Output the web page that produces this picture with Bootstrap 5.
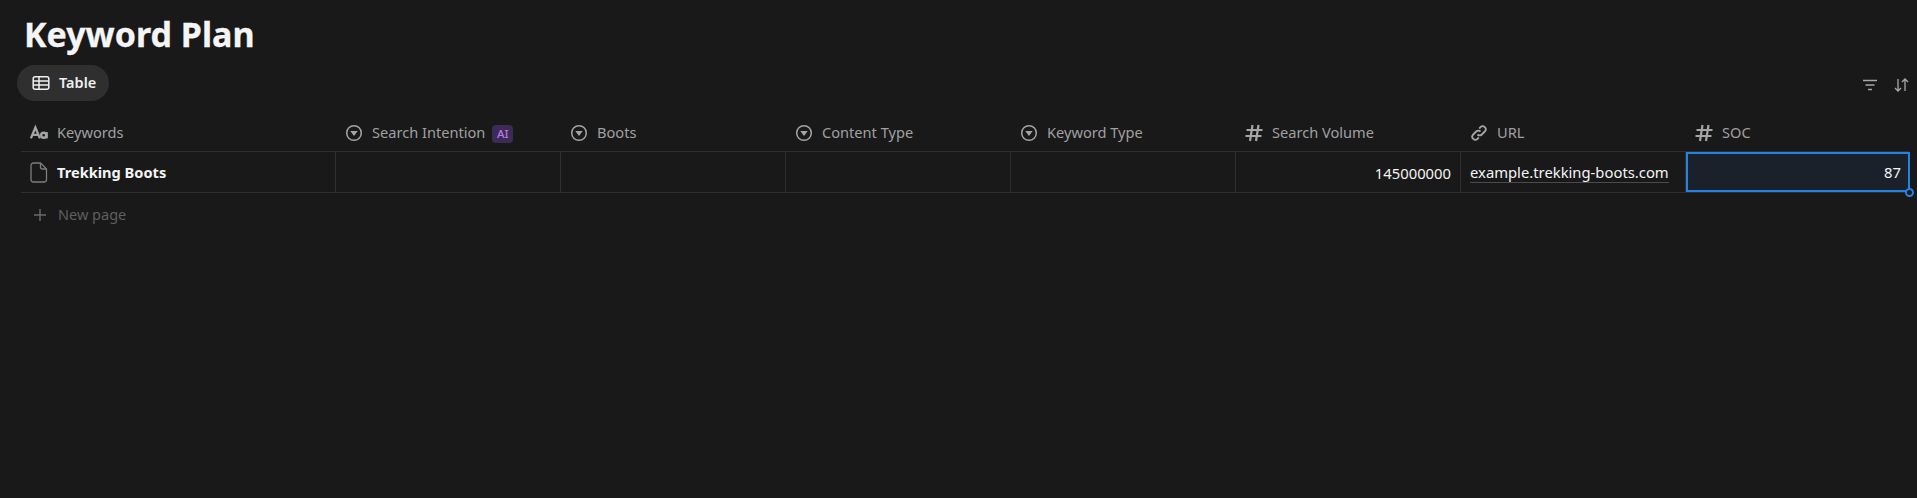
<!DOCTYPE html>
<html lang="en">
<head>
<meta charset="utf-8">
<title>Keyword Plan</title>
<link rel="stylesheet" href="https://cdn.jsdelivr.net/npm/bootstrap@5.3.0/dist/css/bootstrap.min.css">
<style>
html,body{height:100%;overflow:hidden}
body{background:#191919;color:#fff;font-family:"Noto Sans","Open Sans",sans-serif;font-size:15px}
.kp-page{padding:0 8px 0 17px;height:498px}
.kp-title{font-size:34px;font-weight:700;line-height:44px;margin:12px 0 9px 7px;color:#f5f5f5;font-family:"Noto Sans",sans-serif;-webkit-text-stroke:.3px #f5f5f5}
.kp-bar{height:36px;margin-bottom:14px}
.kp-pill{height:36px;width:92px;border-radius:18px;background:#2f2f2f;padding-left:15px;gap:9px;font-weight:600;font-size:14.5px;color:#f0f0f0}
.kp-tools{gap:16px;color:#9b9b9b;margin-top:3px}
.kp-table{margin-left:4px;width:1888px}
.kp-row{display:flex}
.kp-head{height:37px;border-bottom:1px solid #2f2f2f;color:#a0a0a0;font-size:14.6px}
.kp-body{height:41px;border-bottom:1px solid #2f2f2f}
.kp-cell{width:225px;flex:none;display:flex;align-items:center;padding:0 9px;gap:9px;white-space:nowrap}
.kp-first{width:315px}
.kp-body .kp-cell{border-right:1px solid #2f2f2f;font-size:14.8px;color:#f4f4f4;padding-top:2px}
.kp-body .kp-cell:last-child{border-right:0}
.kp-ico{flex:none;width:18px;height:18px;color:#a5a5a5}
.kp-doc{width:18px;height:21px;margin-top:-2px}
.kp-num{justify-content:flex-end}
.kp-name{font-weight:700;font-size:14.6px}
.kp-url{border-bottom:1px solid #4a4a4a;line-height:19px}
.kp-ai{background:#3c2b57;color:#b27ce8;font-size:11.5px;font-weight:500;border-radius:4px;width:21px;height:18px;display:flex;align-items:center;justify-content:center;margin-left:-2px;margin-top:2px}
.kp-body .kp-sel{position:relative;width:224px;background:#1a212a;box-shadow:inset 0 0 0 2px #2383e2;height:40px;padding:0 9px 0 0}
.kp-handle{position:absolute;right:-4px;bottom:-5px;width:9px;height:9px;border-radius:50%;border:2px solid #2383e2;background:#191919}
.kp-new{height:43px;padding-left:11px;gap:10px;color:#5f5f5f;font-size:14.5px}
</style>
</head>
<body>
<div class="kp-page">
  <h1 class="kp-title">Keyword Plan</h1>
  <div class="kp-bar d-flex justify-content-between align-items-center">
    <div class="kp-pill d-flex align-items-center">
      <svg width="18" height="18" viewBox="0 0 18 18" fill="none" stroke="#f0f0f0" stroke-width="1.500"><rect x="1.200" y="2.800" width="15.600" height="12.400" rx="2"/><path d="M1.200 7h15.600M1.200 11h15.600M7 3v12"/></svg>
      <span>Table</span>
    </div>
    <div class="kp-tools d-flex align-items-center">
      <svg width="16" height="12" viewBox="0 0 16 12" fill="none" stroke="#a8a8a8" stroke-width="1.500"><path d="M1 1.500h14M3.500 6h9M6 10.500h4"/></svg>
      <svg width="15" height="14" viewBox="0 0 15 14" fill="none" stroke="#a8a8a8" stroke-width="1.300"><path d="M4 1v12M1 10l3 3 3-3M11 13V1M8 4l3-3 3 3"/></svg>
    </div>
  </div>
  <div class="kp-table">
    <div class="kp-row kp-head">
      <div class="kp-cell kp-first"><svg class="kp-ico" viewBox="0 0 20 18" fill="none" stroke="#a5a5a5" stroke-width="2.600"><path d="M1 15L6 3l5 12M2.800 11h6.400"/><circle cx="15.200" cy="11.500" r="2.800"/><path d="M18.500 8v7"/></svg><span>Keywords</span></div>
      <div class="kp-cell"><svg class="kp-ico" viewBox="0 0 18 18"><circle cx="9" cy="9" r="7.300" fill="none" stroke="currentColor" stroke-width="1.500"/><path d="M5.300 7h7.400L9 12z" fill="currentColor"/></svg><span>Search Intention</span><span class="kp-ai">AI</span></div>
      <div class="kp-cell"><svg class="kp-ico" viewBox="0 0 18 18"><circle cx="9" cy="9" r="7.300" fill="none" stroke="currentColor" stroke-width="1.500"/><path d="M5.300 7h7.400L9 12z" fill="currentColor"/></svg><span>Boots</span></div>
      <div class="kp-cell"><svg class="kp-ico" viewBox="0 0 18 18"><circle cx="9" cy="9" r="7.300" fill="none" stroke="currentColor" stroke-width="1.500"/><path d="M5.300 7h7.400L9 12z" fill="currentColor"/></svg><span>Content Type</span></div>
      <div class="kp-cell"><svg class="kp-ico" viewBox="0 0 18 18"><circle cx="9" cy="9" r="7.300" fill="none" stroke="currentColor" stroke-width="1.500"/><path d="M5.300 7h7.400L9 12z" fill="currentColor"/></svg><span>Keyword Type</span></div>
      <div class="kp-cell"><svg class="kp-ico" viewBox="0 0 18 18" fill="none" stroke="currentColor" stroke-width="2.200"><path d="M7.500 1L5 17M13.500 1L11 17M1.500 6h16M.5 12h16"/></svg><span>Search Volume</span></div>
      <div class="kp-cell"><svg class="kp-ico" viewBox="0 0 18 18" fill="none" stroke="currentColor" stroke-width="1.800"><path d="M7.500 10.500a3 3 0 0 0 4.300 0l3-3a3 3 0 0 0-4.300-4.300L9.200 4.500"/><path d="M10.500 7.500a3 3 0 0 0-4.300 0l-3 3a3 3 0 0 0 4.300 4.300l1.300-1.300"/></svg><span>URL</span></div>
      <div class="kp-cell"><svg class="kp-ico" viewBox="0 0 18 18" fill="none" stroke="currentColor" stroke-width="2.200"><path d="M7.500 1L5 17M13.500 1L11 17M1.500 6h16M.5 12h16"/></svg><span>SOC</span></div>
    </div>
    <div class="kp-row kp-body">
      <div class="kp-cell kp-first"><svg class="kp-ico kp-doc" viewBox="0 0 18 21" fill="none" stroke="#7d7d7d" stroke-width="1.300"><path d="M3.500 1h7L16.500 7v10.500a2.500 2.500 0 0 1-2.500 2.500H3.500A2.500 2.500 0 0 1 1 17.500v-14A2.500 2.500 0 0 1 3.500 1z"/><path d="M10.500 1v4a2 2 0 0 0 2 2h4"/></svg><span class="kp-name">Trekking Boots</span></div>
      <div class="kp-cell"></div>
      <div class="kp-cell"></div>
      <div class="kp-cell"></div>
      <div class="kp-cell"></div>
      <div class="kp-cell kp-num"><span>145000000</span></div>
      <div class="kp-cell"><span class="kp-url">example.trekking-boots.com</span></div>
      <div class="kp-cell kp-num kp-sel"><span>87</span><span class="kp-handle"></span></div>
    </div>
    <div class="kp-new d-flex align-items-center">
      <svg width="16" height="16" viewBox="0 0 16 16" fill="none" stroke="#6a6a6a" stroke-width="1.400"><path d="M8 2v12M2 8h12"/></svg>
      <span>New page</span>
    </div>
  </div>
</div>
<script src="https://cdn.jsdelivr.net/npm/bootstrap@5.3.0/dist/js/bootstrap.bundle.min.js"></script>
</body>
</html>
